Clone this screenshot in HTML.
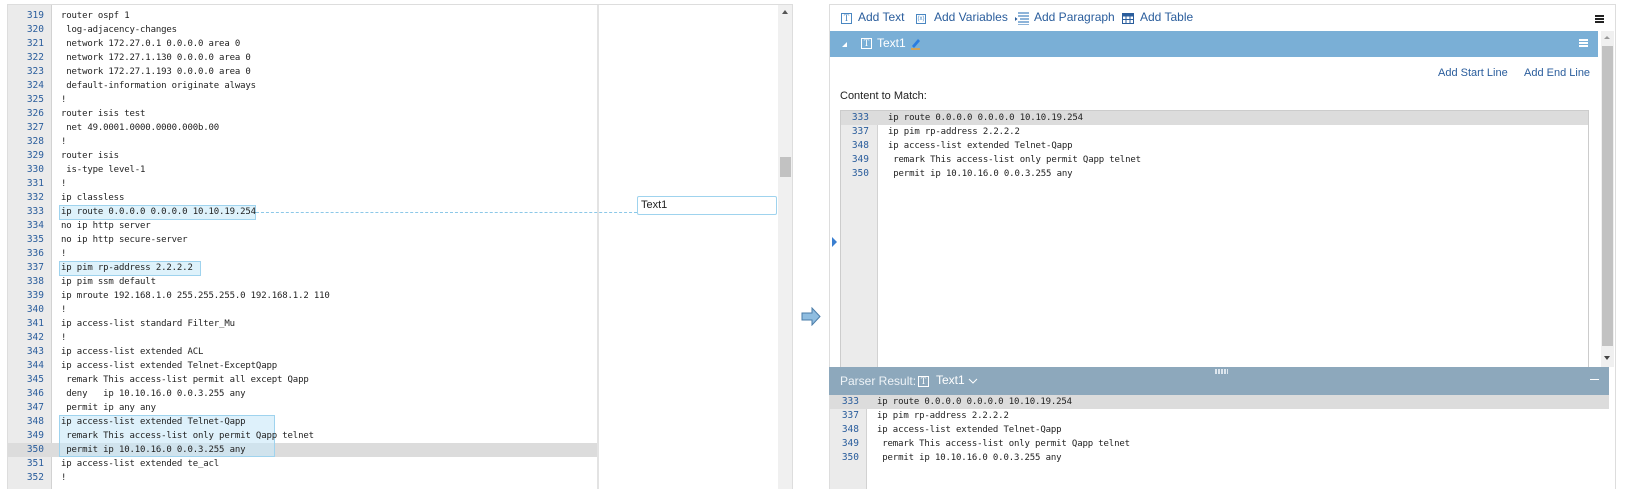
<!DOCTYPE html>
<html><head><meta charset="utf-8"><style>
*{margin:0;padding:0;box-sizing:border-box}
body{width:1628px;height:489px;background:#fff;position:relative;overflow:hidden;font-family:"Liberation Sans",sans-serif}
.a{position:absolute}
.mono{font-family:"DejaVu Sans Mono","Liberation Mono",monospace;font-size:9px;letter-spacing:-0.15px;color:#222;white-space:pre}
.ln{position:absolute;height:14px;line-height:14px}
.num{color:#2a5d9c;text-align:right;font-family:"DejaVu Sans Mono","Liberation Mono",monospace;font-size:9.5px}
.hl{position:absolute;background:#def2fb;border:1px solid #9fd3ee}
.tb{position:absolute;top:10px;font-size:12px;color:#2a5d9c;line-height:14px}
.ic{position:absolute;border:1px solid #4a87c2;font-family:"Liberation Serif",serif;font-size:9px;color:#4a87c2;text-align:center;line-height:9px}
</style></head><body>
<div class="a" style="left:7px;top:4px;width:786px;height:485px;border:1px solid #ddd;border-bottom:none;background:#fff"></div>
<div class="a" style="left:8px;top:5px;width:44px;height:484px;background:#ebebeb;border-right:1px solid #d2d2d2"></div>
<div class="a" style="left:597px;top:5px;width:2px;height:484px;background:#e3e3e3"></div>
<div class="a" style="left:778px;top:5px;width:14px;height:484px;background:#f0f0f0"></div>
<div class="a" style="left:780px;top:157px;width:11px;height:20px;background:#c2c2c2"></div>
<div class="a" style="left:782px;top:10px;width:0;height:0;border-left:3px solid transparent;border-right:3px solid transparent;border-bottom:4px solid #555"></div>
<div class="a" style="left:8px;top:443px;width:589px;height:14px;background:#dcdcdc"></div>
<div class="hl" style="left:59px;top:205px;width:197px;height:15px"></div>
<div class="hl" style="left:59px;top:261px;width:142px;height:15px"></div>
<div class="hl" style="left:59px;top:415px;width:216px;height:42px;background:rgba(200,232,248,.6)"></div>
<div class="a" style="left:256px;top:212px;width:381px;border-top:1px dashed #8cc8e8"></div>
<div class="a" style="left:637px;top:196px;width:140px;height:19px;border:1px solid #9fd3ee;border-radius:2px;font-size:11px;line-height:17px;padding-left:3px;color:#222">Text1</div>
<div id="L"></div>
<svg class="a" style="left:801px;top:307px" width="21" height="19" viewBox="0 0 21 19"><path d="M1 6h10V1l8 8.5-8 8.5v-5H1z" fill="#8fbde0" stroke="#4a7ca8" stroke-width="1"/></svg>
<div class="a" style="left:829px;top:4px;width:787px;height:485px;border:1px solid #ddd;border-bottom:none"></div>
<div class="ic" style="left:841px;top:13px;width:11px;height:11px">T</div><div class="tb" style="left:858px">Add Text</div>
<div class="ic" style="left:916px;top:14px;width:10px;height:10px;font-size:6px;font-family:'Liberation Sans'">(x)</div><div class="tb" style="left:934px">Add Variables</div>
<svg class="a" style="left:1015px;top:12px" width="14" height="13"><path d="M3 1h11M3 4h11M5 7h9M3 10h11M3 13h11" stroke="#4a87c2" stroke-width="1.2"/><path d="M0 5l2.5 2L0 9z" fill="#2a5d9c"/></svg><div class="tb" style="left:1034px">Add Paragraph</div>
<svg class="a" style="left:1122px;top:13px" width="12" height="11"><rect x=".5" y=".5" width="11" height="10" fill="#fff" stroke="#2a5d9c"/><rect x=".5" y=".5" width="11" height="3" fill="#2a5d9c"/><path d="M0 6.5h12M4 3v8M8 3v8" stroke="#2a5d9c"/></svg><div class="tb" style="left:1140px">Add Table</div>
<div class="a" style="left:1595px;top:15px;width:9px;height:2px;background:#222;box-shadow:0 3px #222,0 6px #222"></div>
<div class="a" style="left:830px;top:31px;width:768px;height:26px;background:#7aafd6"></div>
<div class="a" style="left:842px;top:42px;border-left:5px solid transparent;border-bottom:5px solid #fff"></div>
<div class="ic" style="left:861px;top:38px;width:11px;height:11px;border-color:#fff;color:#fff">T</div>
<div class="a" style="left:877px;top:36px;font-size:12px;color:#fff;line-height:14px">Text1</div>
<svg class="a" style="left:910px;top:37px" width="11" height="13"><path d="M2 9l6-7 2 2-6 7z" fill="#2b7de0"/><path d="M1 12h9" stroke="#f0a030" stroke-width="1.5"/></svg>
<div class="a" style="left:1579px;top:39px;width:9px;height:2px;background:#fff;box-shadow:0 3px #fff,0 6px #fff"></div>
<div class="a" style="left:1601px;top:31px;width:13px;height:336px;background:#f0f0f0"></div>
<div class="a" style="left:1602px;top:46px;width:11px;height:300px;background:#c2c2c2"></div>
<div class="a" style="left:1604px;top:36px;border-left:3px solid transparent;border-right:3px solid transparent;border-bottom:3px solid #999"></div>
<div class="a" style="left:1604px;top:356px;border-left:3px solid transparent;border-right:3px solid transparent;border-top:4px solid #444"></div>
<div class="a" style="left:1438px;top:67px;font-size:11px;color:#2a5d9c">Add Start Line</div>
<div class="a" style="left:1524px;top:67px;font-size:11px;color:#2a5d9c">Add End Line</div>
<div class="a" style="left:840px;top:90px;font-size:11px;color:#222">Content to Match:</div>
<div class="a" style="left:840px;top:110px;width:749px;height:257px;border:1px solid #ccc;border-bottom:none"></div>
<div class="a" style="left:841px;top:111px;width:37px;height:256px;background:#ebebeb;border-right:1px solid #d2d2d2"></div>
<div class="a" style="left:841px;top:111px;width:747px;height:14px;background:#dcdcdc"></div>
<div class="a" style="left:832px;top:237px;border-top:5px solid transparent;border-bottom:5px solid transparent;border-left:5px solid #3a7fd0"></div>
<div id="C"></div>
<div class="a" style="left:829px;top:367px;width:780px;height:28px;background:#8da8bc"></div>
<div class="a" style="left:1215px;top:369px;width:13px;height:5px;background:repeating-linear-gradient(90deg,#dde6ee 0 2px,transparent 2px 3px)"></div>
<div class="a" style="left:840px;top:374px;font-size:12px;color:#eef3f7">Parser Result:</div>
<div class="ic" style="left:918px;top:376px;width:11px;height:11px;border-color:#fff;color:#fff">T</div>
<div class="a" style="left:936px;top:373px;font-size:12px;color:#fff">Text1</div>
<svg class="a" style="left:968px;top:378px" width="10" height="7"><path d="M1 1l4 4 4-4" stroke="#fff" fill="none"/></svg>
<div class="a" style="left:1590px;top:379px;width:9px;height:1px;background:#fff"></div>
<div class="a" style="left:830px;top:395px;width:37px;height:94px;background:#ebebeb;border-right:1px solid #d2d2d2"></div>
<div class="a" style="left:830px;top:395px;width:779px;height:14px;background:#dcdcdc"></div>
<div id="R"></div>
<script>
var L=[["319","router ospf 1"],["320"," log-adjacency-changes"],["321"," network 172.27.0.1 0.0.0.0 area 0"],["322"," network 172.27.1.130 0.0.0.0 area 0"],["323"," network 172.27.1.193 0.0.0.0 area 0"],["324"," default-information originate always"],["325","!"],["326","router isis test"],["327"," net 49.0001.0000.0000.000b.00"],["328","!"],["329","router isis"],["330"," is-type level-1"],["331","!"],["332","ip classless"],["333","ip route 0.0.0.0 0.0.0.0 10.10.19.254"],["334","no ip http server"],["335","no ip http secure-server"],["336","!"],["337","ip pim rp-address 2.2.2.2"],["338","ip pim ssm default"],["339","ip mroute 192.168.1.0 255.255.255.0 192.168.1.2 110"],["340","!"],["341","ip access-list standard Filter_Mu"],["342","!"],["343","ip access-list extended ACL"],["344","ip access-list extended Telnet-ExceptQapp"],["345"," remark This access-list permit all except Qapp"],["346"," deny   ip 10.10.16.0 0.0.3.255 any"],["347"," permit ip any any"],["348","ip access-list extended Telnet-Qapp"],["349"," remark This access-list only permit Qapp telnet"],["350"," permit ip 10.10.16.0 0.0.3.255 any"],["351","ip access-list extended te_acl"],["352","!"]];
var S=[["333","ip route 0.0.0.0 0.0.0.0 10.10.19.254"],["337","ip pim rp-address 2.2.2.2"],["348","ip access-list extended Telnet-Qapp"],["349"," remark This access-list only permit Qapp telnet"],["350"," permit ip 10.10.16.0 0.0.3.255 any"]];
function put(id,arr,top,nr,tx){var h="";arr.forEach(function(r,i){var y=top+i*14;h+='<div class="ln num" style="left:'+(nr-40)+'px;width:40px;top:'+y+'px">'+r[0]+'</div><div class="ln mono" style="left:'+tx+'px;top:'+y+'px">'+r[1]+'</div>'});document.getElementById(id).innerHTML=h}
put("L",L,9,44,61);put("C",S,111,869,888);put("R",S,395,859,877);
</script>
</body></html>
